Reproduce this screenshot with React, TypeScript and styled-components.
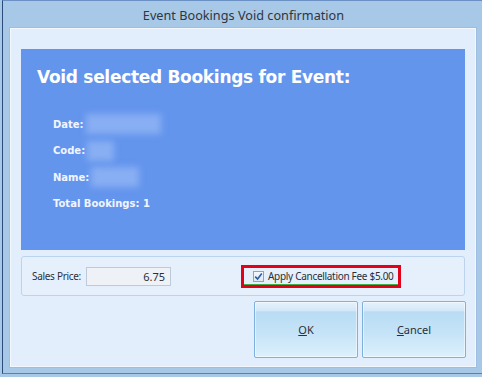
import styled, { createGlobalStyle } from 'styled-components';

const GlobalStyle = createGlobalStyle`
	html, body {
		margin: 0;
		padding: 0;
		background: #a8c8e8;
	}
	* {
		box-sizing: border-box;
	}
`;

const details = [
	{ label: 'Date:', blur: 75 },
	{ label: 'Code:', blur: 27 },
	{ label: 'Name:', blur: 48 },
];

const App = () => {
	return (
		<>
			<GlobalStyle />
			<Frame>
				<Window>
					<TitleBar>Event Bookings Void confirmation</TitleBar>
					<Client>
						<Banner>
							<Heading>Void selected Bookings for Event:</Heading>
							<Details>
								{details.map(d => (
									<DetailRow key={d.label}>
										<Label>{d.label}</Label>
										<Hidden $width={d.blur} />
									</DetailRow>
								))}
								<DetailRow>
									<Label>Total Bookings: 1</Label>
								</DetailRow>
							</Details>
						</Banner>
						<GroupBox>
							<PriceField>
								<FieldLabel>Sales Price:</FieldLabel>
								<ReadOnlyBox>6.75</ReadOnlyBox>
							</PriceField>
							<FeeHighlight>
								<CheckBox>
									<svg width='9' height='9' viewBox='0 0 9 9'>
										<path
											d='M1.2 4.6 L3.6 7 L7.8 1.6'
											fill='none'
											stroke='#2a5aa8'
											strokeWidth='1.6'
										/>
									</svg>
								</CheckBox>
								<FieldLabel>Apply Cancellation Fee $5.00</FieldLabel>
							</FeeHighlight>
						</GroupBox>
						<ButtonRow>
							<DialogButton>
								<u>O</u>K
							</DialogButton>
							<DialogButton>
								<u>C</u>ancel
							</DialogButton>
						</ButtonRow>
					</Client>
				</Window>
			</Frame>
		</>
	);
};

const Frame = styled.div`
	width: 482px;
	height: 377px;
	padding-left: 2px;
	overflow: hidden;
`;

const Window = styled.div`
	height: 374px;
	border-left: 1px solid #2c4b7a;
	border-top: 1px solid #6b90c4;
	border-bottom: 1px solid #5c80b4;
	background: #a8c8e8;
	display: flex;
	flex-direction: column;
`;

const TitleBar = styled.div`
	height: 27px;
	display: flex;
	align-items: center;
	justify-content: center;
	padding-left: 2px;
	font-family: 'Noto Sans', 'Open Sans', sans-serif;
	font-size: 12.7px;
	color: #2f3640;
`;

const Client = styled.div`
	margin-left: 7px;
	width: 466px;
	height: 339px;
	border: 1px solid #f3f8fe;
	box-shadow: 0 0 0 1px #9fbde0;
	background: #e3eefc;
	padding: 20px 10px 0;
	display: flex;
	flex-direction: column;
`;

const Banner = styled.div`
	height: 201px;
	background: #6495ed;
	padding: 17px 16px 0;
`;

const Heading = styled.div`
	font-family: 'DejaVu Sans', Verdana, sans-serif;
	font-weight: bold;
	font-size: 17px;
	color: #fff;
	letter-spacing: -0.3px;
	line-height: 22px;
`;

const Details = styled.div`
	display: flex;
	flex-direction: column;
	gap: 4.5px;
	margin-top: 25px;
	padding-left: 16px;
`;

const DetailRow = styled.div`
	height: 22px;
	display: flex;
	align-items: center;
`;

const Label = styled.span`
	font-family: 'DejaVu Sans', Verdana, sans-serif;
	font-weight: bold;
	font-size: 10px;
	color: #f2f5ff;
`;

const Hidden = styled.span<{ $width: number }>`
	width: ${p => p.$width}px;
	height: 20px;
	margin-left: 2px;
	background: rgba(165, 195, 248, 0.55);
	filter: blur(3px);
`;

const GroupBox = styled.div`
	margin-top: 6px;
	height: 40px;
	border: 1px solid #bcd3ee;
	border-radius: 3px;
	background: #e6f0fc;
	display: flex;
	align-items: center;
	padding: 0 10px;
`;

const PriceField = styled.div`
	display: flex;
	align-items: center;
	gap: 5px;
	width: 209px;
`;

const FieldLabel = styled.span`
	font-family: 'Noto Sans', 'Open Sans', sans-serif;
	font-size: 10px;
	letter-spacing: -0.3px;
	white-space: nowrap;
	color: #2a2f38;
`;

const ReadOnlyBox = styled.div`
	width: 85px;
	height: 19px;
	border: 1px solid #bfcad8;
	background: #eef2f7;
	font-family: 'Noto Sans', 'Open Sans', sans-serif;
	font-size: 11px;
	color: #2a2f38;
	text-align: right;
	padding-right: 5px;
	line-height: 17px;
`;

const FeeHighlight = styled.div`
	width: 160px;
	height: 23px;
	border: 3px solid #e2001a;
	box-shadow: inset 0 -1px 0 #3fae49;
	display: flex;
	align-items: center;
	gap: 4px;
	padding-left: 9px;
`;

const CheckBox = styled.span`
	flex: none;
	width: 11px;
	height: 11px;
	border: 1px solid #8aa4c8;
	background: linear-gradient(#f4f8fc, #dfe8f3);
	display: flex;
	align-items: center;
	justify-content: center;
`;

const ButtonRow = styled.div`
	margin-top: 5px;
	margin-right: -1px;
	display: flex;
	justify-content: flex-end;
	gap: 4px;
`;

const DialogButton = styled.button`
	width: 104px;
	height: 57px;
	border: 1px solid #7eb0e0;
	border-radius: 2px;
	background: linear-gradient(
		#e6f2fc 0%,
		#d3e7f8 16%,
		#b9dcf4 18%,
		#c4e3f7 55%,
		#dcf1fc 100%
	);
	box-shadow: inset 0 0 0 1px rgba(255, 255, 255, 0.5);
	font-family: 'Noto Sans', 'Open Sans', sans-serif;
	font-size: 11px;
	color: #2a2f38;
	padding: 0;
`;

export default App;
